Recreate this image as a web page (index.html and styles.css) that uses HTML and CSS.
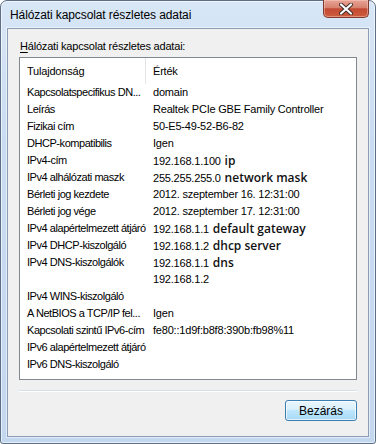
FILE: index.html
```html
<!DOCTYPE html>
<html lang="hu">
<head>
    <meta charset="UTF-8">
    <title>Hálózati kapcsolat részletes adatai</title>
    <link rel="stylesheet" href="styles.css">
</head>
<body>
    <div class="window">
        <div class="titlebar">
            <span class="title">Hálózati kapcsolat részletes adatai</span>
            <button class="close-btn" aria-label="Bezárás">
                <svg viewBox="0 0 14 12" width="14" height="12"><path d="M2 1.5 L12 10.5 M12 1.5 L2 10.5" stroke="#3a2a2a" stroke-width="4" stroke-linecap="round"/><path d="M2 1.5 L12 10.5 M12 1.5 L2 10.5" stroke="#fff" stroke-width="2.2" stroke-linecap="round"/></svg>
            </button>
        </div>

        <div class="client">
            <label class="group-label"><u>H</u>álózati kapcsolat részletes adatai:</label>

            <div class="listview">
                <div class="lv-header">
                    <div class="lv-col">Tulajdonság</div>
                    <div class="lv-col">Érték</div>
                </div>
                <div class="lv-row"><div class="lv-cell">Kapcsolatspecifikus DN...</div><div class="lv-cell">domain</div></div>
                <div class="lv-row"><div class="lv-cell">Leírás</div><div class="lv-cell">Realtek PCIe GBE Family Controller</div></div>
                <div class="lv-row"><div class="lv-cell">Fizikai cím</div><div class="lv-cell">50-E5-49-52-B6-82</div></div>
                <div class="lv-row"><div class="lv-cell">DHCP-kompatibilis</div><div class="lv-cell">Igen</div></div>
                <div class="lv-row"><div class="lv-cell">IPv4-cím</div><div class="lv-cell">192.168.1.100 <span class="note">ip</span></div></div>
                <div class="lv-row"><div class="lv-cell">IPv4 alhálózati maszk</div><div class="lv-cell">255.255.255.0 <span class="note">network mask</span></div></div>
                <div class="lv-row"><div class="lv-cell">Bérleti jog kezdete</div><div class="lv-cell">2012. szeptember 16. 12:31:00</div></div>
                <div class="lv-row"><div class="lv-cell">Bérleti jog vége</div><div class="lv-cell">2012. szeptember 17. 12:31:00</div></div>
                <div class="lv-row"><div class="lv-cell">IPv4 alapértelmezett átjáró</div><div class="lv-cell">192.168.1.1 <span class="note">default gateway</span></div></div>
                <div class="lv-row"><div class="lv-cell">IPv4 DHCP-kiszolgáló</div><div class="lv-cell">192.168.1.2 <span class="note">dhcp server</span></div></div>
                <div class="lv-row"><div class="lv-cell">IPv4 DNS-kiszolgálók</div><div class="lv-cell">192.168.1.1 <span class="note">dns</span></div></div>
                <div class="lv-row"><div class="lv-cell"></div><div class="lv-cell">192.168.1.2</div></div>
                <div class="lv-row"><div class="lv-cell">IPv4 WINS-kiszolgáló</div><div class="lv-cell"></div></div>
                <div class="lv-row"><div class="lv-cell">A NetBIOS a TCP/IP fel...</div><div class="lv-cell">Igen</div></div>
                <div class="lv-row"><div class="lv-cell">Kapcsolati szintű IPv6-cím</div><div class="lv-cell">fe80::1d9f:b8f8:390b:fb98%11</div></div>
                <div class="lv-row"><div class="lv-cell">IPv6 alapértelmezett átjáró</div><div class="lv-cell"></div></div>
                <div class="lv-row"><div class="lv-cell">IPv6 DNS-kiszolgáló</div><div class="lv-cell"></div></div>
            </div>

            <div class="separator"></div>

            <div class="actions">
                <button class="win-button">Bezárás</button>
            </div>
        </div>
    </div>
</body>
</html>
```

FILE: styles.css
```css
:root {
    --ui-font: 'Liberation Sans', Arial, sans-serif;
    --frame-top: #d8e7f6; --frame-bottom: #c3d7ef;
    --client-bg: #f0f0f0; --client-border: #8a9db4;
    --list-border: #828790;
    --text: #000;
}
* { margin: 0; padding: 0; box-sizing: border-box; }
body { width: 376px; height: 444px; overflow: hidden; font-family: var(--ui-font); background: #fff; }

.window {
    width: 376px; height: 444px; display: flex; flex-direction: column;
    border: 1px solid #5d6f86; border-radius: 7px 7px 3px 3px;
    background: linear-gradient(180deg, var(--frame-top), #cadcf1 30%, var(--frame-bottom));
    box-shadow: inset 0 0 0 1px rgba(255,255,255,0.6);
}

/* title bar */
.titlebar { height: 27px; display: flex; justify-content: space-between; align-items: flex-start; padding: 0 6px 0 9px; }
.title { font-size: 12px; letter-spacing: -0.1px; line-height: 15px; margin-top: 7px; color: #000; }
.close-btn {
    width: 46px; height: 18px; margin-top: -1px; border: 1px solid #7e3b32; border-top: none;
    border-radius: 0 0 5px 5px; display: flex; align-items: center; justify-content: center; cursor: pointer;
    background: linear-gradient(180deg, #e7a496 0%, #d7826f 45%, #c24a33 52%, #cf5c3e 100%);
    box-shadow: inset 0 0 0 1px rgba(255,210,200,0.45);
}

/* client area */
.client {
    flex: 1; margin: 0 6px 6px 6px; display: flex; flex-direction: column;
    background: var(--client-bg); border: 1px solid var(--client-border);
    padding: 10px 11px 0 11px; box-shadow: 0 0 0 1px rgba(255,255,255,0.5);
}
.group-label { display: block; font-size: 11px; letter-spacing: -0.2px; line-height: 15px; padding-left: 1px; margin-bottom: 3px; color: var(--text); }
.group-label u { text-decoration-thickness: 1px; text-underline-offset: 2px; }

.listview { height: 323px; background: #fff; border: 1px solid var(--list-border); font-size: 11px; letter-spacing: -0.2px; color: var(--text); }
.lv-header { display: grid; grid-template-columns: 126px 1fr; height: 26px; align-items: center; }
.lv-col { padding-left: 7px; line-height: 26px; }
.lv-col:first-child { border-right: 1px solid #e5e5e5; }
.lv-row { display: grid; grid-template-columns: 126px 1fr; height: 17px; align-items: center; }
.lv-cell { padding-left: 7px; line-height: 17px; white-space: nowrap; overflow: hidden; }
.lv-cell:first-child { letter-spacing: -0.45px; }
.note { font-family: 'Open Sans', sans-serif; font-size: 12px; font-weight: 600; letter-spacing: 0; color: #111; margin-left: 1px; }

.separator { margin-top: 10px; border-top: 1px solid #d5dfe5; border-bottom: 1px solid #fff; }

.actions { display: flex; justify-content: flex-end; margin-top: 8px; }
.win-button {
    width: 72px; height: 21px; font-family: var(--ui-font); font-size: 12px; color: #000;
    border: 1px solid #3c7fb1; border-radius: 3px; cursor: pointer;
    background: linear-gradient(180deg, #eaf6fd 0%, #d9f0fc 45%, #bee6fd 50%, #a7d9f5 100%);
    box-shadow: inset 0 0 0 1px rgba(255,255,255,0.7);
}
```
